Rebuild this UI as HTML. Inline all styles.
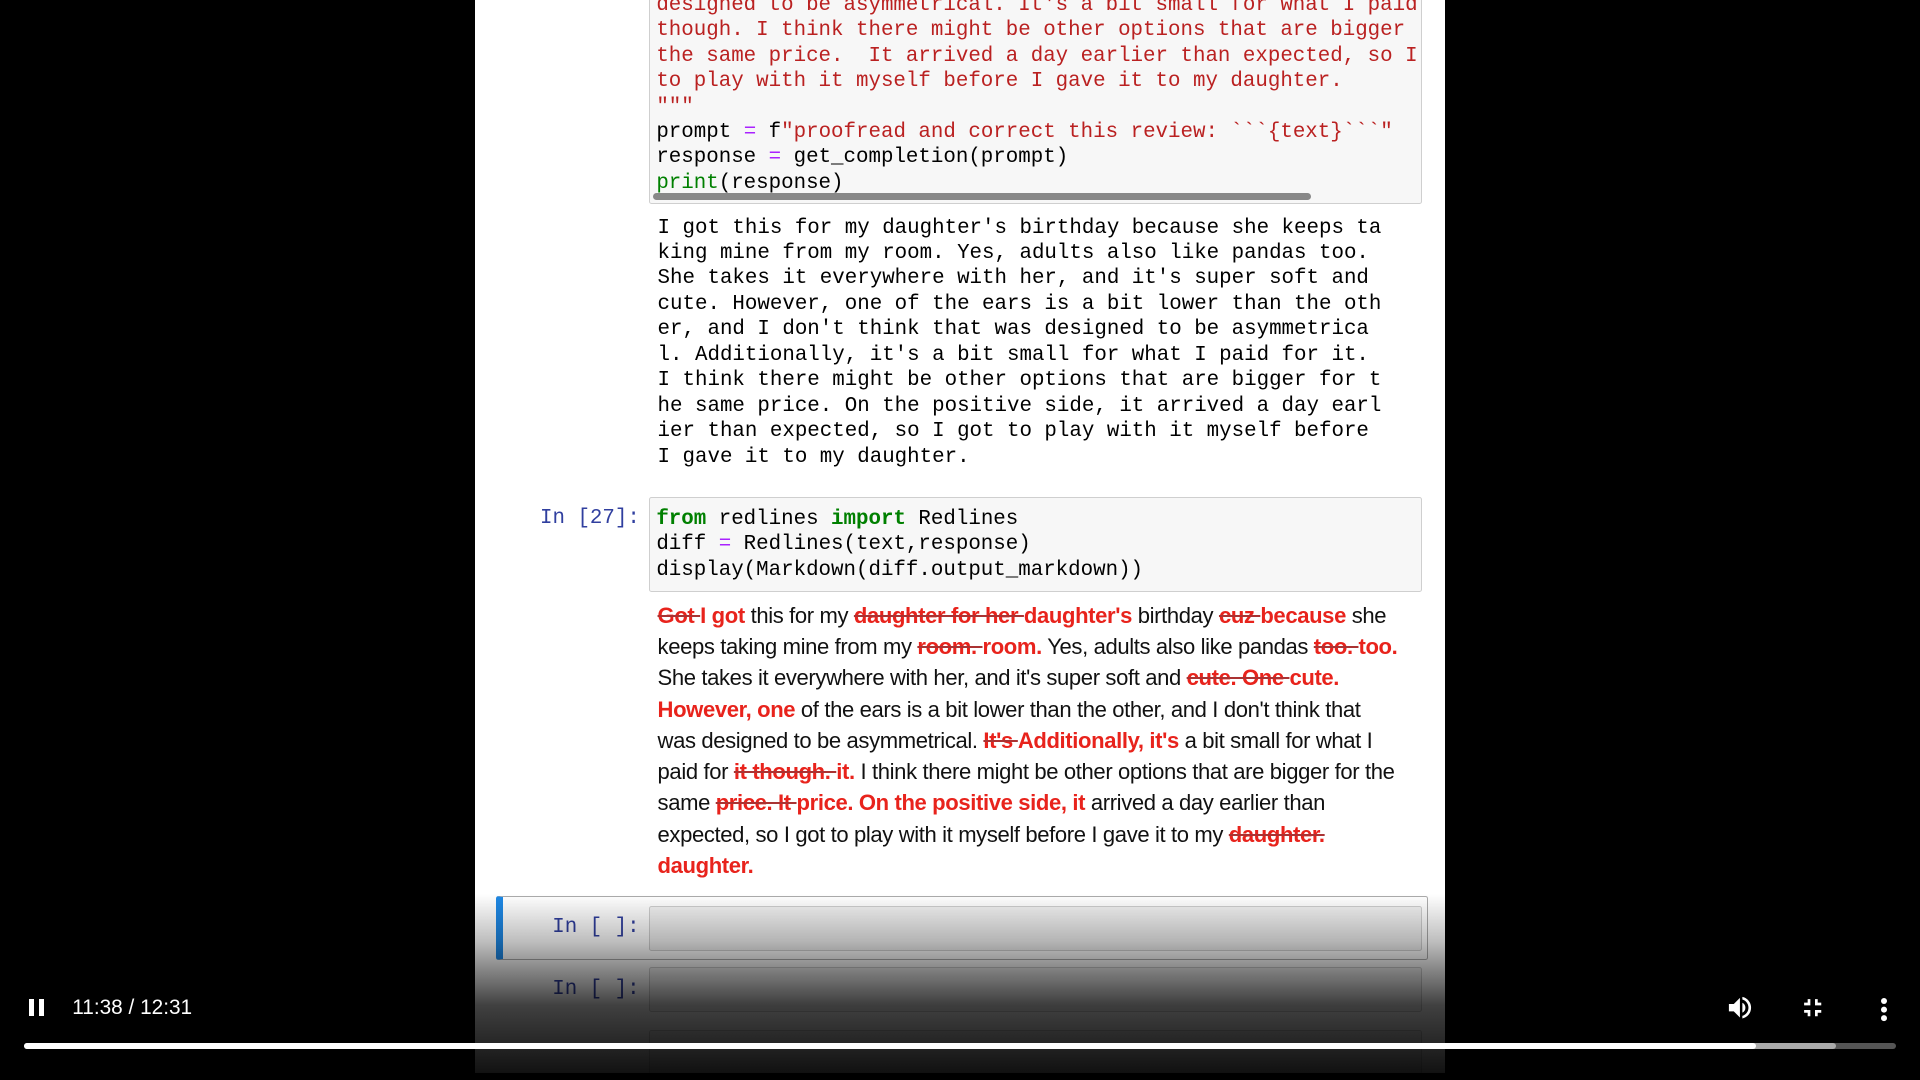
<!DOCTYPE html>
<html><head><meta charset="utf-8"><style>
html,body{margin:0;padding:0;background:#000;overflow:hidden}
#w{position:relative;width:1568px;height:882px;zoom:1.22449;background:#000;overflow:hidden}
.page{position:absolute;left:388px;top:0;width:792px;height:882px;background:#fff}
.mono{font-family:"Liberation Mono",monospace;font-size:17px;line-height:20.8px;white-space:pre;position:absolute}
.box{position:absolute;left:530px;width:630px;background:#f7f7f7;border:1px solid #cfcfcf;border-radius:2px}
.r{color:#ba2121}.k{color:#008000;font-weight:bold}.o{color:#aa22ff}.b{color:#008000}
.pr{position:absolute;color:#303f9f;font-family:"Liberation Mono",monospace;font-size:17px}
.md{position:absolute;left:537px;top:490px;font-family:"Liberation Sans",sans-serif;font-size:18px;line-height:25.5px;color:#111;letter-spacing:-0.3px;white-space:nowrap}
.md del{color:#e8231c;font-weight:bold;text-decoration:line-through;text-decoration-color:#a33}
.md ins{color:#e8231c;font-weight:bold;text-decoration:none}
.ov{position:absolute;left:0;top:730px;width:1568px;height:152px;background:linear-gradient(to bottom,rgba(0,0,0,0) 0%,rgba(0,0,0,0.25) 25%,rgba(0,0,0,0.75) 60%,rgba(0,0,0,0.95) 100%)}
.ctl{position:absolute;color:#fff;font-family:"Liberation Sans",sans-serif}
</style></head><body><div id="w">
<div class="page"></div>
<div class="box" style="top:-4px;height:169px"></div>
<div class="mono" style="left:536px;top:-6px;width:624px;overflow:hidden"><span class="r">designed to be asymmetrical. It's a bit small for what I paid
though. I think there might be other options that are bigger
the same price.  It arrived a day earlier than expected, so I
to play with it myself before I gave it to my daughter.
"""</span>
prompt <span class="o">=</span> f<span class="r">"proofread and correct this review: &#96;&#96;&#96;{text}&#96;&#96;&#96;"</span>
response <span class="o">=</span> get_completion(prompt)
<span class="b">print</span>(response)</div>
<div style="position:absolute;left:533px;top:158px;width:538px;height:5px;background:#888;border-radius:3px"></div>
<div class="mono" style="left:537px;top:176px;color:#000">I got this for my daughter's birthday because she keeps ta
king mine from my room. Yes, adults also like pandas too.
She takes it everywhere with her, and it's super soft and
cute. However, one of the ears is a bit lower than the oth
er, and I don't think that was designed to be asymmetrica
l. Additionally, it's a bit small for what I paid for it.
I think there might be other options that are bigger for t
he same price. On the positive side, it arrived a day earl
ier than expected, so I got to play with it myself before
I gave it to my daughter.</div>
<div class="pr" style="left:441px;top:414px">In [27]:</div>
<div class="box" style="top:406px;height:76px"></div>
<div class="mono" style="left:536px;top:414px"><span class="k">from</span> redlines <span class="k">import</span> Redlines
diff <span class="o">=</span> Redlines(text,response)
display(Markdown(diff.output_markdown))</div>
<div class="md"><del>Got </del><ins>I got</ins> this for my <del>daughter for her </del><ins>daughter's</ins> birthday <del>cuz </del><ins>because</ins> she<br>keeps taking mine from my <del>room. </del><ins>room.</ins> Yes, adults also like pandas <del>too. </del><ins>too.</ins><br>She takes it everywhere with her, and it's super soft and <del>cute. One </del><ins>cute.</ins><br><ins>However, one</ins> of the ears is a bit lower than the other, and I don't think that<br>was designed to be asymmetrical. <del>It's </del><ins>Additionally, it's</ins> a bit small for what I<br>paid for <del>it though. </del><ins>it.</ins> I think there might be other options that are bigger for the<br>same <del>price. It </del><ins>price. On the positive side, it</ins> arrived a day earlier than<br>expected, so I got to play with it myself before I gave it to my <del>daughter. </del><br><ins>daughter.</ins></div>
<div style="position:absolute;left:405px;top:732px;width:755px;height:50px;border:1px solid #ababab;border-left:6px solid #1e88e5;border-radius:2px"></div>
<div class="pr" style="left:451px;top:748px">In [ ]:</div>
<div class="box" style="top:740px;height:35px;background:#f2f2f2"></div>
<div class="pr" style="left:451px;top:799px">In [ ]:</div>
<div class="box" style="top:790px;height:35px;background:#f2f2f2"></div>
<div class="box" style="top:841px;height:35px;background:#f2f2f2"></div>
<div class="ov"></div>
<div style="position:absolute;left:0;top:876px;width:1568px;height:6px;background:#000"></div>
<div style="position:absolute;left:24px;top:816px;width:4px;height:14px;background:#fff"></div>
<div style="position:absolute;left:32px;top:816px;width:4px;height:14px;background:#fff"></div>
<div class="ctl" style="left:59px;top:813px;font-size:17px">11:38 / 12:31</div>
<div style="position:absolute;left:20px;top:852px;width:1528px;height:5px;background:#555;border-radius:3px"></div>
<div style="position:absolute;left:20px;top:852px;width:1479px;height:5px;background:#aaa;border-radius:3px"></div>
<div style="position:absolute;left:20px;top:852px;width:1414px;height:5px;background:#fff;border-radius:3px"></div>
<svg style="position:absolute;left:1408px;top:811px" width="26" height="24" viewBox="0 0 24 24"><path fill="#fff" d="M3 9v6h4l5 5V4L7 9H3zm13.5 3A4.5 4.5 0 0 0 14 8v8a4.5 4.5 0 0 0 2.5-4zM14 3.2v2.1a7 7 0 0 1 0 13.4v2.1a9 9 0 0 0 0-17.6z"/></svg>
<svg style="position:absolute;left:1468px;top:811px" width="24" height="24" viewBox="0 0 24 24"><path fill="none" stroke="#fff" stroke-width="2.2" d="M5 9h4V5M15 5v4h4M19 15h-4v4M9 19v-4H5"/></svg>
<div style="position:absolute;left:1536px;top:815px;width:5px;height:5px;border-radius:50%;background:#fff;box-shadow:0 7px 0 #fff,0 14px 0 #fff"></div>
</div></body></html>
